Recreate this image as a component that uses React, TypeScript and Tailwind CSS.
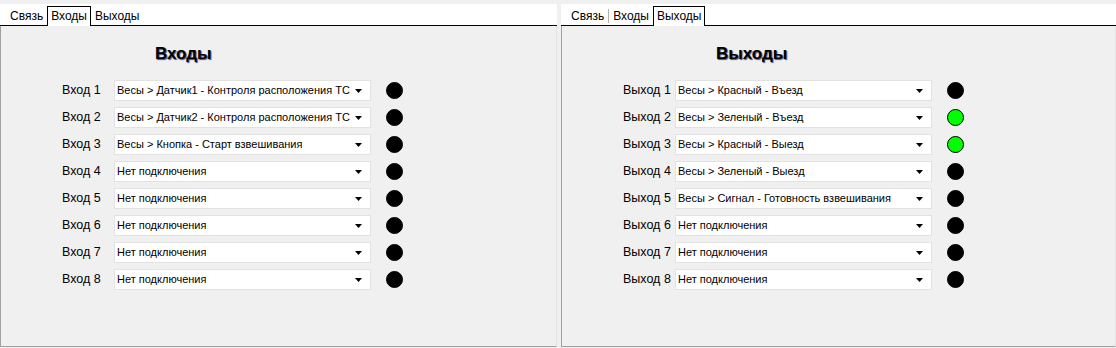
const font = { fontFamily: '"Liberation Sans", Arial, sans-serif' };

type Row = { text: string; on: boolean };

const inputs: Row[] = [
  { text: 'Весы > Датчик1 - Контроля расположения ТС', on: false },
  { text: 'Весы > Датчик2 - Контроля расположения ТС', on: false },
  { text: 'Весы > Кнопка - Старт взвешивания', on: false },
  { text: 'Нет подключения', on: false },
  { text: 'Нет подключения', on: false },
  { text: 'Нет подключения', on: false },
  { text: 'Нет подключения', on: false },
  { text: 'Нет подключения', on: false },
];

const outputs: Row[] = [
  { text: 'Весы > Красный - Въезд', on: false },
  { text: 'Весы > Зеленый - Въезд', on: true },
  { text: 'Весы > Красный - Выезд', on: true },
  { text: 'Весы > Зеленый - Выезд', on: false },
  { text: 'Весы > Сигнал - Готовность взвешивания', on: false },
  { text: 'Нет подключения', on: false },
  { text: 'Нет подключения', on: false },
  { text: 'Нет подключения', on: false },
];

const tabs = ['Связь', 'Входы', 'Выходы'];

function Tabs({ active }: { active: number }) {
  return (
    <div className="pt-[4px] bg-[#f0f0f0]">
      <div className="h-[22px] bg-white border-b border-black flex items-end pl-[6px]">
        {tabs.map((t, i) =>
          i === active ? (
            <div
              key={t}
              className="relative -mb-px h-[20px] px-[3px] bg-white border-x border-t border-black text-[12px] leading-[18px] text-black"
            >
              {t}
            </div>
          ) : (
            <div key={t} className="h-[19px] flex items-center text-[12px] text-black">
              <span className="px-[4px]">{t}</span>
              {i < tabs.length - 1 && i + 1 !== active && <span className="w-px h-[14px] bg-[#b0b0b0]" />}
            </div>
          )
        )}
      </div>
    </div>
  );
}

function Combo({ text }: { text: string }) {
  return (
    <div className="w-[257px] h-[21px] bg-white border border-[#e2e2e2] flex items-center pl-[2px] pr-[8px] text-[11px] text-black">
      <span className="flex-1 truncate">{text}</span>
      <svg width="7" height="4" viewBox="0 0 7 4">
        <polygon points="0,0 7,0 3.5,4" fill="#000" />
      </svg>
    </div>
  );
}

function Panel({ title, prefix, active, rows, className }: { title: string; prefix: string; active: number; rows: Row[]; className: string }) {
  return (
    <div className={`flex flex-col ${className}`} style={font}>
      <Tabs active={active} />
      <div className="h-[321px] bg-[#f0f0f0] border-l border-b border-r border-l-[#a0a0a0] border-b-[#a0a0a0] border-r-[#e4e4e4]">
        <div className="mt-[18px] ml-[154px] h-[20px] text-[17px] leading-[20px] font-bold text-black [text-shadow:1px_1px_1px_#3c4f86]">
          {title}
        </div>
        <div className="mt-[13px] flex flex-col">
          {rows.map((r, i) => (
            <div key={i} className="h-[27px] flex items-center">
              <div className="ml-[61px] w-[52px] text-[12.5px] text-black whitespace-nowrap">
                {prefix} {i + 1}
              </div>
              <Combo text={r.text} />
              <div
                className={`ml-[15px] w-[17px] h-[17px] rounded-full border-[1.5px] border-black ${r.on ? 'bg-[#00ff00]' : 'bg-black'}`}
              />
            </div>
          ))}
        </div>
      </div>
    </div>
  );
}

export default function App() {
  return (
    <div className="w-[1116px] h-[348px] bg-[#f0f0f0] flex gap-[4px] overflow-hidden">
      <Panel title="Входы" prefix="Вход" active={1} rows={inputs} className="w-[557px]" />
      <Panel title="Выходы" prefix="Выход" active={2} rows={outputs} className="w-[555px]" />
    </div>
  );
}
